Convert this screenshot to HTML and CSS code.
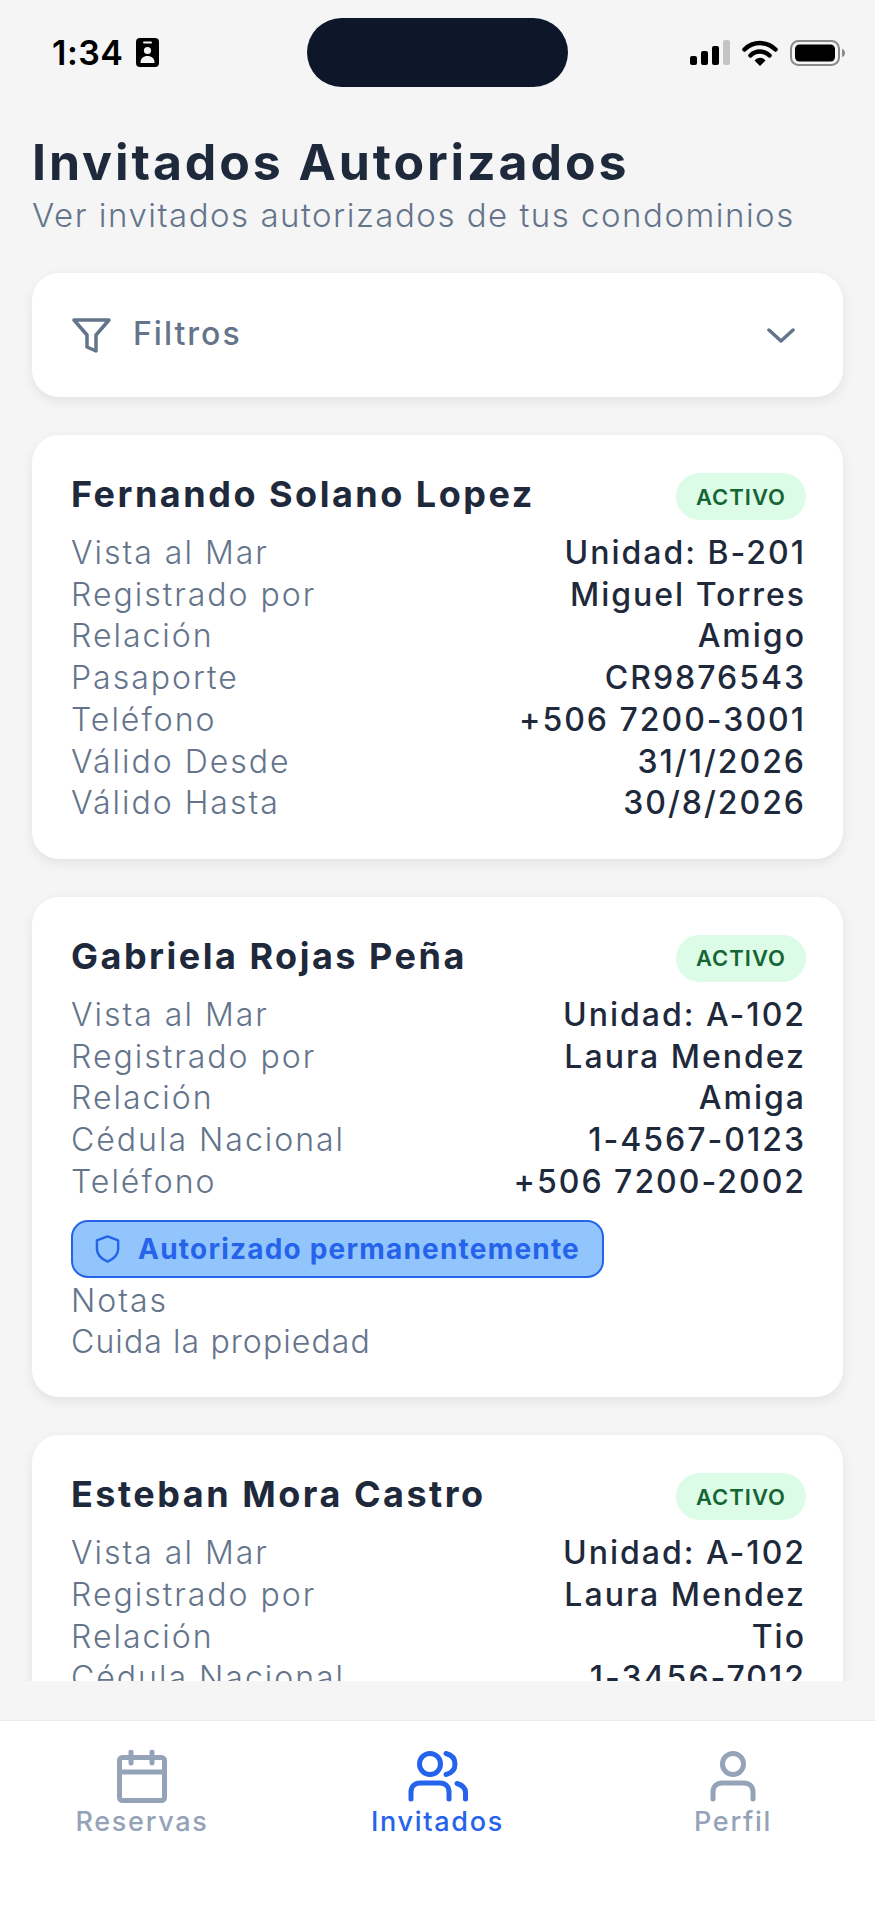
FILE: index.html
```html
<!DOCTYPE html>
<html lang="es">
<head>
  <meta charset="UTF-8">
  <meta name="viewport" content="width=device-width, initial-scale=1.0">
  <title>Invitados Autorizados</title>
  <link rel="stylesheet" href="styles.css">
</head>
<body>
  <div class="phone">
    <!-- Status bar -->
    <div class="status-bar">
      <div class="status-left">
        <span class="clock">1:34</span>
        <svg class="id-icon" viewBox="0 0 23 29" width="23" height="29">
          <rect width="23" height="29" rx="4" fill="#000"/>
          <rect x="7" y="3.500" width="9" height="2" rx="1" fill="#f5f5f5"/>
          <circle cx="11.500" cy="12.500" r="3.600" fill="#f5f5f5"/>
          <path d="M4.500 25c0-5 3-7 7-7s7 2 7 7z" fill="#f5f5f5"/>
        </svg>
      </div>
      <div class="island"></div>
      <div class="status-right">
        <svg viewBox="0 0 40 25" width="40" height="25">
          <rect x="0" y="16" width="7" height="9" rx="2" fill="#000"/>
          <rect x="11" y="11" width="7" height="14" rx="2" fill="#000"/>
          <rect x="22" y="6" width="7" height="19" rx="2" fill="#000"/>
          <rect x="33" y="0" width="7" height="25" rx="2" fill="#c4c4c4"/>
        </svg>
        <svg viewBox="0 0 36 26" width="36" height="26">
          <path d="M2.500 9.500a22 22 0 0 1 31 0" fill="none" stroke="#000" stroke-width="4.500" stroke-linecap="round"/>
          <path d="M8.500 15.500a13.500 13.500 0 0 1 19 0" fill="none" stroke="#000" stroke-width="4.500" stroke-linecap="round"/>
          <path d="M12.500 20.500a7 7 0 0 1 11 0L18 26z" fill="#000"/>
        </svg>
        <svg viewBox="0 0 55 26" width="55" height="26">
          <rect x="1" y="1" width="48" height="24" rx="7.500" fill="none" stroke="#8a8a8a" stroke-width="2"/>
          <rect x="5" y="4.500" width="40" height="17" rx="4.500" fill="#000"/>
          <path d="M52 9c2 .6 3 2 3 4s-1 3.400-3 4z" fill="#8a8a8a"/>
        </svg>
      </div>
    </div>

    <!-- Scrolling content -->
    <main class="content">
      <h1>Invitados Autorizados</h1>
      <p class="subtitle">Ver invitados autorizados de tus condominios</p>

      <div class="filter-card">
        <svg class="filter-icon" viewBox="0 0 39 35" width="39" height="35">
          <path d="M2 2h35L24 17v16l-9-4V17z" fill="none" stroke="#64748b" stroke-width="3.500" stroke-linejoin="round"/>
        </svg>
        <span class="filter-label">Filtros</span>
        <svg class="chevron" viewBox="0 0 28 15" width="28" height="15">
          <path d="M2 2l12 11L26 2" fill="none" stroke="#64748b" stroke-width="3.500" stroke-linecap="round" stroke-linejoin="round"/>
        </svg>
      </div>

      <section class="guest-card">
        <div class="guest-head">
          <h2>Fernando Solano Lopez</h2>
          <span class="badge">ACTIVO</span>
        </div>
        <div class="row"><span>Vista al Mar</span><strong>Unidad: B-201</strong></div>
        <div class="row"><span>Registrado por</span><strong>Miguel Torres</strong></div>
        <div class="row"><span>Relación</span><strong>Amigo</strong></div>
        <div class="row"><span>Pasaporte</span><strong>CR9876543</strong></div>
        <div class="row"><span>Teléfono</span><strong>+506 7200-3001</strong></div>
        <div class="row"><span>Válido Desde</span><strong>31/1/2026</strong></div>
        <div class="row"><span>Válido Hasta</span><strong>30/8/2026</strong></div>
      </section>

      <section class="guest-card">
        <div class="guest-head">
          <h2>Gabriela Rojas Peña</h2>
          <span class="badge">ACTIVO</span>
        </div>
        <div class="row"><span>Vista al Mar</span><strong>Unidad: A-102</strong></div>
        <div class="row"><span>Registrado por</span><strong>Laura Mendez</strong></div>
        <div class="row"><span>Relación</span><strong>Amiga</strong></div>
        <div class="row"><span>Cédula Nacional</span><strong>1-4567-0123</strong></div>
        <div class="row"><span>Teléfono</span><strong>+506 7200-2002</strong></div>
        <div class="permanent">
          <svg viewBox="0 0 26 30" width="26" height="30">
            <path d="M13 2l11 4v9c0 6-4 10-11 13C6 25 2 21 2 15V6z" fill="none" stroke="#2563eb" stroke-width="2.500" stroke-linejoin="round"/>
          </svg>
          <span>Autorizado permanentemente</span>
        </div>
        <div class="note">Notas</div>
        <div class="note note-text">Cuida la propiedad</div>
      </section>

      <section class="guest-card">
        <div class="guest-head">
          <h2>Esteban Mora Castro</h2>
          <span class="badge">ACTIVO</span>
        </div>
        <div class="row"><span>Vista al Mar</span><strong>Unidad: A-102</strong></div>
        <div class="row"><span>Registrado por</span><strong>Laura Mendez</strong></div>
        <div class="row"><span>Relación</span><strong>Tio</strong></div>
        <div class="row"><span>Cédula Nacional</span><strong>1-3456-7012</strong></div>
      </section>
    </main>

    <!-- Bottom tabs -->
    <nav class="tabs">
      <a class="tab">
        <svg viewBox="0 0 50 53" width="50" height="53">
          <rect x="2.500" y="7.500" width="45" height="43" rx="3" fill="none" stroke="currentColor" stroke-width="5"/>
          <path d="M2.500 22h45M14 2v11M35 2v11" fill="none" stroke="currentColor" stroke-width="5" stroke-linecap="round"/>
        </svg>
        <span>Reservas</span>
      </a>
      <a class="tab active">
        <svg viewBox="0 0 60 53" width="60" height="53">
          <circle cx="22" cy="14" r="10.500" fill="none" stroke="currentColor" stroke-width="5"/>
          <path d="M38 3.500c6 1.500 9 5.500 9 10.500s-3 9-9 10.500M3 49v-7c0-6 4-9 9-9h20c5 0 9 3 9 9v7M49 33.500c5 1.500 8.500 4 8.500 9V49" fill="none" stroke="currentColor" stroke-width="5" stroke-linecap="round"/>
        </svg>
        <span>Invitados</span>
      </a>
      <a class="tab">
        <svg viewBox="0 0 46 53" width="46" height="53">
          <circle cx="23" cy="14" r="10.500" fill="none" stroke="currentColor" stroke-width="5"/>
          <path d="M3 49v-7c0-6 4-9 9-9h22c5 0 9 3 9 9v7" fill="none" stroke="currentColor" stroke-width="5" stroke-linecap="round"/>
        </svg>
        <span>Perfil</span>
      </a>
    </nav>
  </div>
</body>
</html>
```

FILE: styles.css
```css
* {
  box-sizing: border-box;
}

body {
  margin: 0;
  background-color: #f5f5f5;
  font-family: Inter, "Liberation Sans", sans-serif;
}

.phone {
  display: flex;
  flex-direction: column;
  height: 1920px;
  overflow: hidden;
}

/* Status bar */
.status-bar {
  display: flex;
  align-items: center;
  height: 105px;
  padding: 18px 30px 18px 52px;
  flex-shrink: 0;
}

.status-left {
  display: flex;
  align-items: center;
  gap: 12px;
  width: 255px;
}

.clock {
  font-size: 34px;
  font-weight: 600;
  color: #000;
  letter-spacing: 0.5px;
}

.island {
  width: 261px;
  height: 69px;
  border-radius: 35px;
  background-color: #0e1729;
}

.status-right {
  display: flex;
  align-items: center;
  gap: 12px;
  margin-left: auto;
}

/* Content */
.content {
  height: 1576px;
  padding: 0 32px;
  overflow: hidden;
  flex-shrink: 0;
}

h1 {
  margin: 27px 0 0;
  font-size: 50px;
  line-height: 60px;
  font-weight: 700;
  letter-spacing: 2.9px;
  color: #1e293b;
}

.subtitle {
  margin: 2px 0 0;
  font-size: 33px;
  line-height: 42px;
  font-weight: 300;
  letter-spacing: 1.5px;
  color: #64748b;
}

.filter-card {
  display: flex;
  align-items: center;
  gap: 22px;
  height: 124px;
  margin-top: 37px;
  padding: 0 48px 0 40px;
  background-color: #fff;
  border-radius: 27px;
  box-shadow: 0 4px 12px rgba(0, 0, 0, 0.08);
}

.filter-label {
  flex: 1;
  margin-top: -4px;
  font-size: 32px;
  font-weight: 500;
  letter-spacing: 2px;
  color: #64748b;
}

.guest-card {
  margin-top: 38px;
  padding: 37px 37px 35px 39px;
  background-color: #fff;
  border-radius: 27px;
  box-shadow: 0 4px 12px rgba(0, 0, 0, 0.08);
}

.guest-head {
  display: flex;
  align-items: flex-start;
  justify-content: space-between;
  margin-bottom: 4px;
  height: 56px;
}

h2 {
  margin: 0;
  font-size: 36px;
  line-height: 44px;
  font-weight: 700;
  letter-spacing: 2.5px;
  color: #1e293b;
}

.badge {
  display: flex;
  align-items: center;
  height: 47px;
  margin-top: 1px;
  padding: 0 20px;
  border-radius: 24px;
  background-color: #dcfce7;
  color: #166534;
  font-size: 22px;
  font-weight: 600;
  letter-spacing: 1px;
}

.row {
  display: flex;
  justify-content: space-between;
  font-size: 32px;
  line-height: 41.7px;
  letter-spacing: 2px;
}

.row span,
.note {
  font-weight: 300;
  color: #64748b;
}

.row strong {
  font-weight: 500;
  color: #1e293b;
}

.note {
  font-size: 32px;
  line-height: 41.7px;
  letter-spacing: 2px;
}

.note-text {
  line-height: 40px;
  letter-spacing: 1.1px;
}

.permanent {
  display: flex;
  align-items: center;
  gap: 18px;
  width: 533px;
  height: 58px;
  margin: 18px 0 2px;
  padding: 0 22px;
  background-color: #93c5fd;
  border: 2px solid #2563eb;
  border-radius: 17px;
  color: #2563eb;
  font-size: 28px;
  font-weight: 700;
  letter-spacing: 1.2px;
  white-space: nowrap;
}

/* Bottom tabs */
.tabs {
  display: grid;
  grid-template-columns: repeat(3, 295.5px);
  justify-content: center;
  margin-top: 39px;
  flex: 1;
  padding-top: 29px;
  background-color: #fff;
  border-top: 1px solid #e8ebef;
}

.tab {
  display: flex;
  flex-direction: column;
  align-items: center;
  color: #94a3b8;
  font-size: 27px;
  font-weight: 500;
  letter-spacing: 1.7px;
}

.tab span {
  margin-top: 2px;
  line-height: 34px;
}

.tab.active {
  color: #2563eb;
}
```
